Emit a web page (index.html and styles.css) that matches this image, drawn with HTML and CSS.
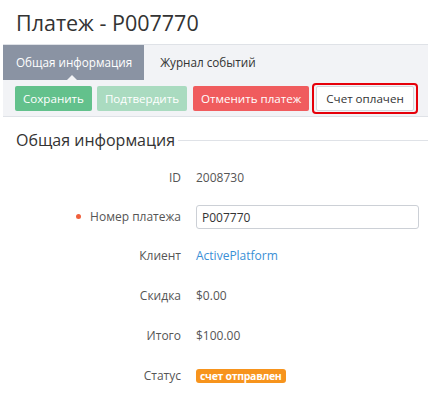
FILE: index.html
```html
<!DOCTYPE html>
<html>
<head>
	<meta charset="utf-8">
	<title>Платеж - P007770</title>
	<link rel="stylesheet" href="styles.css">
</head>
<body>
<div class="page">
	<h1 class="title">Платеж - P007770</h1>
	<ul class="tabs">
		<li class="current">Общая информация</li>
		<li>Журнал событий</li>
	</ul>
	<div class="toolbar">
		<span class="btn btn-save">Сохранить</span>
		<span class="btn btn-confirm">Подтвердить</span>
		<span class="btn btn-cancel">Отменить платеж</span>
		<span class="mark"><span class="btn btn-paid">Счет оплачен</span></span>
	</div>
	<div class="section">
		<h2 class="legend"><span>Общая информация</span></h2>
		<div class="row"><label>ID</label><div class="val">2008730</div></div>
		<div class="row row-input"><label class="req">Номер платежа</label><div class="val"><input type="text" value="P007770"></div></div>
		<div class="row"><label>Клиент</label><div class="val"><a href="#">ActivePlatform</a></div></div>
		<div class="row"><label>Скидка</label><div class="val">$0.00</div></div>
		<div class="row"><label>Итого</label><div class="val">$100.00</div></div>
		<div class="row"><label>Статус</label><div class="val"><span class="badge">счет отправлен</span></div></div>
	</div>
</div>
</body>
</html>
```
FILE: styles.css
```css
body,div,ul,li,h1,h2{margin:0;padding:0;}
ul{list-style-type:none;}
body{background:#fff;font:12px/18px "Open Sans","Liberation Sans",sans-serif;color:#333;}
.page{padding-left:3px;}
.title{font-size:21.5px;line-height:30px;font-weight:400;color:#333;padding:8px 0 6px 13px;}
.tabs{display:flex;background:#f2f3f6;border-top:1px solid #dfe2e7;height:35px;}
.tabs li{padding:0 12px 0 13px;line-height:35px;font-size:11.7px;color:#333;position:relative;white-space:nowrap;}
.tabs li+li{padding-left:16px;}
.tabs li.current{background:#8a93a3;color:#fff;}
.tabs li.current:after{content:"";position:absolute;left:64px;bottom:0;border:5px solid transparent;border-bottom-color:#f2f3f6;border-top:0;}
.toolbar{display:flex;align-items:center;background:#f2f3f6;height:36px;border-bottom:1px solid #dfe2e7;padding-left:12px;}
.btn{display:inline-block;flex-shrink:0;white-space:nowrap;height:25px;line-height:25px;padding:0 8px;font-size:11.6px;border-radius:2px;color:#fff;margin-right:5px;}
.btn-save{background:#63c18c;}
.btn-confirm{background:#aadbc0;margin-right:6px;}
.btn-cancel{background:#f05c5e;margin-right:3px;}
.mark{display:inline-flex;flex-shrink:0;border:2px solid #e6000a;border-radius:4px;padding:1px 2px;}
.btn-paid{background:#fff;color:#333;border:1px solid #d4d8de;height:23px;line-height:23px;margin:0;padding:0 9px;}
.section{padding:0 0 0 13px;}
.legend{display:flex;align-items:center;font-size:16px;font-weight:400;line-height:26px;margin-top:10px;color:#333;}
.legend:after{content:"";flex:1;border-top:1px solid #dfe2e7;margin-left:3px;}
.row{display:flex;align-items:center;height:40px;}
.row label{width:165px;text-align:right;color:#555;padding-right:15px;}
.row .val{color:#555;}
.section .row:nth-child(2){margin-top:5px;}
.row-input{height:38px;}
.row-input .val{flex:1;padding-right:9px;}
.row-input input{width:100%;box-sizing:border-box;height:24px;border:1px solid #ccd0d6;border-radius:3px;font:12px "Open Sans","Liberation Sans",sans-serif;color:#333;padding:0 5px;}
.req:before{content:"";display:inline-block;width:5px;height:5px;border-radius:50%;background:#f0603c;margin-right:9px;vertical-align:middle;position:relative;top:-1px;}
.row a{color:#3a8fd6;text-decoration:none;}
.badge{display:inline-block;background:#f7941d;color:#fff;font-weight:700;font-size:10.5px;letter-spacing:-0.3px;line-height:14px;padding:0 4px;border-radius:3px;}
```
